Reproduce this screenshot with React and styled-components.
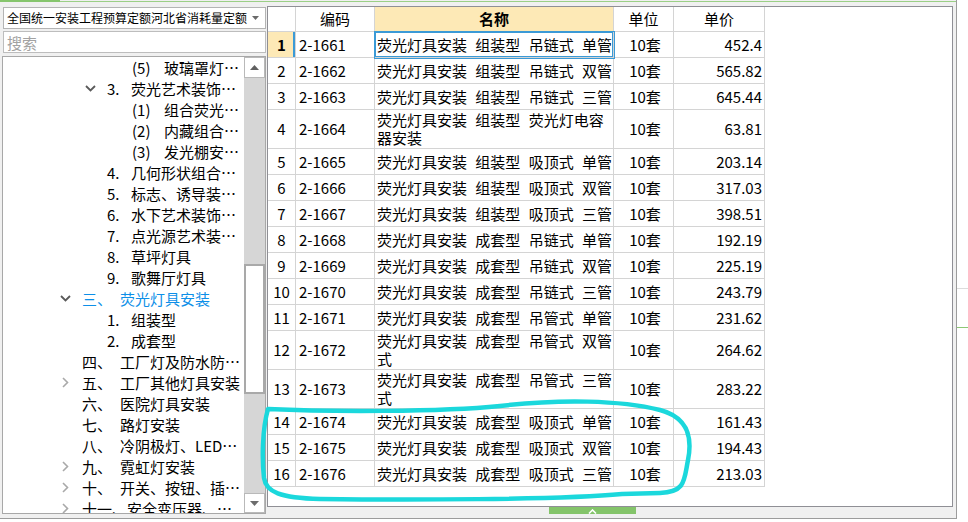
import React from 'react';
import styled, { createGlobalStyle } from 'styled-components';

const GlobalStyle = createGlobalStyle`
  html, body { margin: 0; padding: 0; background: #fff; }
  * { box-sizing: border-box; }
  body { font-family: "Noto Sans CJK SC", "Noto Sans", sans-serif; color: #000; }
`;

const tree = [
  { lvl: 3, num: '(5)', text: '玻璃罩灯具安装' },
  { lvl: 2, num: '3.', text: '荧光艺术装饰灯具安装', open: true },
  { lvl: 3, num: '(1)', text: '组合荧光灯带安装' },
  { lvl: 3, num: '(2)', text: '内藏组合式灯安装' },
  { lvl: 3, num: '(3)', text: '发光棚安装及其他' },
  { lvl: 2, num: '4.', text: '几何形状组合艺术灯具安装' },
  { lvl: 2, num: '5.', text: '标志、诱导装饰灯具安装' },
  { lvl: 2, num: '6.', text: '水下艺术装饰灯具安装' },
  { lvl: 2, num: '7.', text: '点光源艺术装饰灯具安装' },
  { lvl: 2, num: '8.', text: '草坪灯具' },
  { lvl: 2, num: '9.', text: '歌舞厅灯具' },
  { lvl: 1, num: '三、', text: '荧光灯具安装', open: true, active: true },
  { lvl: 2, num: '1.', text: '组装型' },
  { lvl: 2, num: '2.', text: '成套型' },
  { lvl: 1, num: '四、', text: '工厂灯及防水防尘灯安装' },
  { lvl: 1, num: '五、', text: '工厂其他灯具安装', closed: true },
  { lvl: 1, num: '六、', text: '医院灯具安装' },
  { lvl: 1, num: '七、', text: '路灯安装' },
  { lvl: 1, num: '八、', text: '冷阴极灯、LED灯安装' },
  { lvl: 1, num: '九、', text: '霓虹灯安装', closed: true },
  { lvl: 1, num: '十、', text: '开关、按钮、插座安装', closed: true },
  { lvl: 1, num: '十一、', text: '安全变压器、电铃安装', closed: true },
];

const rows = [
  ['2-1661', '荧光灯具安装 组装型 吊链式 单管', '452.4'],
  ['2-1662', '荧光灯具安装 组装型 吊链式 双管', '565.82'],
  ['2-1663', '荧光灯具安装 组装型 吊链式 三管', '645.44'],
  ['2-1664', '荧光灯具安装 组装型 荧光灯电容\n器安装', '63.81'],
  ['2-1665', '荧光灯具安装 组装型 吸顶式 单管', '203.14'],
  ['2-1666', '荧光灯具安装 组装型 吸顶式 双管', '317.03'],
  ['2-1667', '荧光灯具安装 组装型 吸顶式 三管', '398.51'],
  ['2-1668', '荧光灯具安装 成套型 吊链式 单管', '192.19'],
  ['2-1669', '荧光灯具安装 成套型 吊链式 双管', '225.19'],
  ['2-1670', '荧光灯具安装 成套型 吊链式 三管', '243.79'],
  ['2-1671', '荧光灯具安装 成套型 吊管式 单管', '231.62'],
  ['2-1672', '荧光灯具安装 成套型 吊管式 双管\n式', '264.62'],
  ['2-1673', '荧光灯具安装 成套型 吊管式 三管\n式', '283.22'],
  ['2-1674', '荧光灯具安装 成套型 吸顶式 单管', '161.43'],
  ['2-1675', '荧光灯具安装 成套型 吸顶式 双管', '194.43'],
  ['2-1676', '荧光灯具安装 成套型 吸顶式 三管', '213.03'],
];

const numW = { 1: 38, 2: 24, 3: 32 };

const App = () => {
  return (<>
    <GlobalStyle />
    <Screen>
      <Window>
        <TopLine><TopTab /><TopRest /></TopLine>
        <Main>
          <LeftPanel>
            <Combo>
              <ComboText>全国统一安装工程预算定额河北省消耗量定额</ComboText>
              <svg width="7" height="4" viewBox="0 0 7 4"><polygon points="0,0 7,0 3.5,4" fill="#6a6a6a" /></svg>
            </Combo>
            <Search placeholder="搜索" />
            <TreeBox>
              <TreeList>
                {tree.map((t, i) => (
                  <TreeRow key={i} $lvl={t.lvl} $active={t.active}>
                    <Caret>
                      {t.open && (
                        <svg width="11" height="7" viewBox="0 0 11 7">
                          <polyline points="1,1 5.5,5.5 10,1" fill="none" stroke="#5a5a5a" strokeWidth="1.8" />
                        </svg>
                      )}
                      {t.closed && (
                        <svg width="7" height="11" viewBox="0 0 7 11">
                          <polyline points="1,1 5.5,5.5 1,10" fill="none" stroke="#a9a9a9" strokeWidth="1.6" />
                        </svg>
                      )}
                    </Caret>
                    <TreeNum $w={numW[t.lvl]}>{t.num}</TreeNum>
                    <TreeLabel>{t.text}</TreeLabel>
                  </TreeRow>
                ))}
              </TreeList>
              <ScrollBar>
                <ScrollBtn $h={21}>
                  <svg width="9" height="5" viewBox="0 0 9 5"><polygon points="0,5 9,5 4.5,0" fill="#606060" /></svg>
                </ScrollBtn>
                <Track>
                  <Thumb />
                </Track>
                <ScrollBtn $h={20}>
                  <svg width="9" height="5" viewBox="0 0 9 5"><polygon points="0,0 9,0 4.5,5" fill="#6c6c6c" /></svg>
                </ScrollBtn>
              </ScrollBar>
            </TreeBox>
          </LeftPanel>

          <RightPanel>
            <Frame>
              <Grid>
                <Row $h={25}>
                  <Cell />
                  <HeadCell>编码</HeadCell>
                  <HeadCell $hl>名称</HeadCell>
                  <HeadCell>单位</HeadCell>
                  <HeadCell>单价</HeadCell>
                </Row>
                {rows.map((r, i) => (
                  <Row key={i} $h={r[1].includes('\n') ? 39 : 26}>
                    <NumCell $sel={i === 0}>{i + 1}</NumCell>
                    <Cell>{r[0]}</Cell>
                    <NameCell $sel={i === 0}>{r[1]}</NameCell>
                    <Cell $center>10套</Cell>
                    <Cell $right>{r[2]}</Cell>
                  </Row>
                ))}
              </Grid>
            </Frame>
            <Splitter>
              <Grip>
                <svg width="9" height="5" viewBox="0 0 9 5">
                  <polyline points="1,4.5 4.5,1 8,4.5" fill="none" stroke="#fff" strokeWidth="1.6" />
                </svg>
              </Grip>
            </Splitter>
          </RightPanel>
        </Main>
      </Window>
      <SideStrip>
        <SideLine $top={288} $c="#dcdcdc" />
        <SideLine $top={38} $c="#8cc775" />
      </SideStrip>

      <Mark width="968" height="522" viewBox="0 0 968 522">
        <path
          d="M 268 409 C 330 412, 440 412, 500 406 C 560 399, 620 400, 660 410 C 690 418, 692 440, 688 460 C 684 480, 686 492, 660 493 L 622 494 C 560 500, 400 500, 320 499 C 280 498, 266 492, 264 478 C 262 460, 262 430, 268 409 Z"
          fill="none" stroke="#1bd8dc" strokeWidth="4.5" strokeLinejoin="round"
        />
      </Mark>
    </Screen>
  </>);
};

const Screen = styled.div`
  position: relative;
  width: 968px;
  height: 522px;
  display: flex;
  overflow: hidden;
`;

const Window = styled.div`
  width: 957px;
  height: 519px;
  background: #f0f0f0;
  border-right: 1px solid #9c9c9c;
  border-bottom: 1px solid #9c9c9c;
  display: flex;
  flex-direction: column;
`;

const TopLine = styled.div`
  height: 2px;
  display: flex;
`;
const TopTab = styled.div`
  width: 60px;
  background: #86c56d;
`;
const TopRest = styled.div`
  flex: 1;
  border-top: 1px solid #f0f0f0;
  background: #9bcf86;
`;

const Main = styled.div`
  flex: 1;
  display: flex;
`;

const LeftPanel = styled.div`
  width: 267px;
  padding-top: 5px;
  display: flex;
  flex-direction: column;
`;

const Combo = styled.div`
  margin-left: 3px;
  width: 263px;
  height: 22px;
  background: #fff;
  border: 1px solid #b4b4b4;
  display: flex;
  align-items: center;
  padding: 0 6px 0 3px;
  gap: 4px;
`;
const ComboText = styled.span`
  flex: 1;
  font-size: 12px;
  line-height: 16px;
  white-space: nowrap;
  overflow: hidden;
`;

const Search = styled.input`
  margin: 2px 0 0 3px;
  width: 263px;
  height: 22px;
  border: 1px solid #bdbdbd;
  background: #fff;
  font: 15px "Noto Sans CJK SC", sans-serif;
  padding: 0 3px;
  outline: none;
  &::placeholder { color: #a2a2a2; }
`;

const TreeBox = styled.div`
  margin: 3px 0 0 2px;
  width: 264px;
  height: 458px;
  background: #fff;
  border: 1px solid #a8a8a8;
  display: flex;
  overflow: hidden;
`;

const TreeList = styled.div`
  width: 239px;
  overflow: hidden;
`;

const TreeRow = styled.div`
  height: 21px;
  display: flex;
  align-items: center;
  padding-left: ${p => 20 + 25 * p.$lvl}px;
  font-size: 15px;
  line-height: 21px;
  color: ${p => (p.$active ? '#0d8fe8' : '#000')};
  white-space: nowrap;
`;

const Caret = styled.span`
  width: 34px;
  flex: none;
  display: flex;
  align-items: center;
  justify-content: center;
`;

const TreeNum = styled.span`
  flex: none;
  min-width: ${p => p.$w}px;
`;

const TreeLabel = styled.span`
  flex: 0 1 auto;
  min-width: 0;
  overflow: hidden;
  text-overflow: ellipsis;
`;

const ScrollBar = styled.div`
  width: 21px;
  margin-left: 3px;
  display: flex;
  flex-direction: column;
`;

const ScrollBtn = styled.div`
  height: ${p => p.$h}px;
  background: #fff;
  border: 1px solid #b9b9b9;
  display: flex;
  align-items: center;
  justify-content: center;
`;

const Track = styled.div`
  flex: 1;
  background: #d6d6d6;
  padding-top: 186px;
`;

const Thumb = styled.div`
  height: 130px;
  background: #fff;
  border: 2px solid #a9a9a9;
`;

const RightPanel = styled.div`
  flex: 1;
  padding: 4px 3px 0 0;
  display: flex;
  flex-direction: column;
`;

const Frame = styled.div`
  height: 501px;
  background: #fff;
  border: 1px solid #8f8f95;
`;

const Grid = styled.div`
  width: 497px;
`;

const Row = styled.div`
  display: grid;
  grid-template-columns: 28px 79px 239px 60px 91px;
  height: ${p => p.$h}px;
`;

const Cell = styled.div`
  border-right: 1px solid #d4d4d4;
  border-bottom: 1px solid #d4d4d4;
  display: flex;
  align-items: center;
  justify-content: ${p => (p.$center ? 'center' : p.$right ? 'flex-end' : 'flex-start')};
  padding: 0 ${p => (p.$right ? 2 : 0)}px 0 ${p => (p.$right ? 0 : 3)}px;
  font-size: 15px;
  line-height: 18px;
  white-space: nowrap;
`;

const HeadCell = styled(Cell)`
  justify-content: center;
  padding: 0;
  background: ${p => (p.$hl ? '#fde9b6' : '#fff')};
  font-weight: ${p => (p.$hl ? 700 : 400)};
`;

const NumCell = styled(Cell)`
  justify-content: center;
  padding: 0;
  background: ${p => (p.$sel ? '#fde9b6' : '#fff')};
  font-weight: ${p => (p.$sel ? 700 : 400)};
  box-shadow: ${p => (p.$sel ? 'inset -2px 0 0 #3b9ad6' : 'none')};
`;

const NameCell = styled(Cell)`
  padding-left: 2px;
  white-space: pre;
  word-spacing: 5px;
  box-shadow: ${p => (p.$sel ? '0 0 0 1px #3b9ad6, inset 0 0 0 1px #3b9ad6' : 'none')};
  position: ${p => (p.$sel ? 'relative' : 'static')};
`;

const Splitter = styled.div`
  height: 11px;
  padding-left: 282px;
`;

const Grip = styled.div`
  width: 87px;
  height: 7px;
  background: #84c46a;
  display: flex;
  align-items: flex-end;
  justify-content: center;
`;

const SideStrip = styled.div`
  width: 11px;
  display: flex;
  flex-direction: column;
`;

const SideLine = styled.div`
  margin-top: ${p => p.$top}px;
  height: 1px;
  background: ${p => p.$c};
`;

const Mark = styled.svg`
  position: absolute;
  left: 0;
  top: 0;
  pointer-events: none;
`;

export default App;
